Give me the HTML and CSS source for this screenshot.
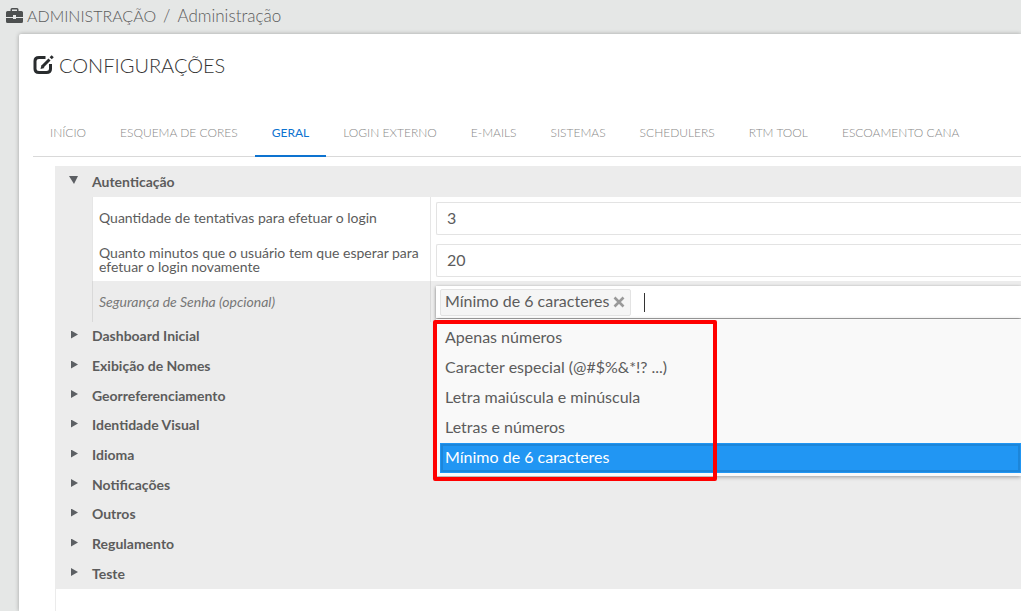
FILE: index.html
```html
<!DOCTYPE html>
<html lang="pt-BR">
<head>
<meta charset="utf-8">
<title>Configurações</title>
<link rel="stylesheet" href="styles.css">
</head>
<body>
<header class="crumbs">
  <svg class="crumbs-icon" viewBox="0 0 17 15" aria-hidden="true"><path fill="#4d5050" fill-rule="evenodd" d="M4.500 3V1.500Q4.500 0 6 0h5q1.500 0 1.500 1.500V3h3Q17 3 17 4.500V9H0V4.500Q0 3 1.500 3zM6 3h5V1.500H6zM7 7v2h3V7zM0 10h7v1h3v-1h7v3.500Q17 15 15.500 15h-14Q0 15 0 13.500z"/></svg>
  <span class="crumbs-root">ADMINISTRAÇÃO</span><span>/</span><span>Administração</span>
</header>
<main class="panel">
  <h1 class="title">
    <svg class="title-icon" viewBox="0 0 20 20" aria-hidden="true"><g fill="none" stroke="#292c2e"><path stroke-width="3" d="M12 2.500H5.500Q1.500 2.500 1.500 6v8q0 3.500 4 3.500h7.500q4 0 4-3.500V9"/><path stroke-width="3" d="M9 11.500 16 4.500"/><path stroke-width="3" d="M17.200 3.300 19.200 1.300"/></g><path fill="#292c2e" d="M7 14l1-4 3 3z"/></svg>
    CONFIGURAÇÕES
  </h1>
  <nav class="tabs">
    <a class="tab" href="#inicio">INÍCIO</a>
    <a class="tab" href="#cores">ESQUEMA DE CORES</a>
    <a class="tab tab-active" href="#geral" aria-current="page">GERAL</a>
    <a class="tab" href="#login">LOGIN EXTERNO</a>
    <a class="tab" href="#emails">E-MAILS</a>
    <a class="tab" href="#sistemas">SISTEMAS</a>
    <a class="tab" href="#schedulers">SCHEDULERS</a>
    <a class="tab" href="#rtm">RTM TOOL</a>
    <a class="tab" href="#cana">ESCOAMENTO CANA</a>
  </nav>
  <div class="content">
    <section class="tree">
      <button class="node node-open" type="button" aria-expanded="true"><i class="arrow arrow-down"></i>Autenticação</button>
      <form class="fields">
        <div class="field">
          <label class="name" for="tries">Quantidade de tentativas para efetuar o login</label>
          <div class="value"><input class="box" id="tries" type="text" value="3"></div>
        </div>
        <div class="field">
          <label class="name" for="wait">Quanto minutos que o usuário tem que esperar para efetuar o login novamente</label>
          <div class="value"><input class="box" id="wait" type="text" value="20"></div>
        </div>
        <div class="field field-optional">
          <label class="name" for="security">Segurança de Senha (opcional)</label>
          <div class="value">
            <div class="multi">
              <span class="chip">Mínimo de 6 caracteres
                <button class="chip-remove" type="button" aria-label="Remover"><svg class="cross" viewBox="0 0 12 12" aria-hidden="true"><path d="M1.500 1.500l9 9M10.500 1.500l-9 9" stroke="#999" stroke-width="2.600"/></svg></button>
              </span>
              <span class="caret"></span>
              <input class="search" id="security" type="text">
            </div>
            <div class="menu">
              <button class="option" type="button">Apenas números</button>
              <button class="option" type="button">Caracter especial (@#$%&amp;*!? ...)</button>
              <button class="option" type="button">Letra maiúscula e minúscula</button>
              <button class="option" type="button">Letras e números</button>
              <button class="option option-selected" type="button">Mínimo de 6 caracteres</button>
              <div class="highlight"></div>
            </div>
          </div>
        </div>
      </form>
      <div class="nodes">
        <button class="node" type="button"><i class="arrow"></i>Dashboard Inicial</button>
        <button class="node" type="button"><i class="arrow"></i>Exibição de Nomes</button>
        <button class="node" type="button"><i class="arrow"></i>Georreferenciamento</button>
        <button class="node" type="button"><i class="arrow"></i>Identidade Visual</button>
        <button class="node" type="button"><i class="arrow"></i>Idioma</button>
        <button class="node" type="button"><i class="arrow"></i>Notificações</button>
        <button class="node" type="button"><i class="arrow"></i>Outros</button>
        <button class="node" type="button"><i class="arrow"></i>Regulamento</button>
        <button class="node" type="button"><i class="arrow"></i>Teste</button>
      </div>
    </section>
  </div>
</main>
</body>
</html>
```
FILE: styles.css
```css
* { box-sizing: border-box; }
html, body { height: 100%; }
body {
  margin: 0;
  display: flex;
  flex-direction: column;
  overflow: hidden;
  background: #e5e7e6;
  color: #5c5c5c;
  font-family: Lato, "Open Sans", sans-serif;
  font-size: 16px;
}
button, input { font: inherit; color: inherit; }
button { border: 0; padding: 0; background: none; text-align: left; }

.crumbs {
  display: flex;
  align-items: center;
  gap: 7px;
  height: 34px;
  padding: 0 6px 3px;
  font-size: 17px;
  font-weight: 300;
  flex: none;
}
.crumbs-icon { width: 17px; height: 15px; margin-right: -3px; }
.crumbs-root { font-size: 16px; }

.panel {
  flex: 1;
  display: flex;
  flex-direction: column;
  margin-left: 19px;
  padding-left: 14px;
  background: #fff;
  border-top-left-radius: 2px;
  box-shadow: 0 0 4px rgba(0, 0, 0, .3);
}
.title {
  display: flex;
  align-items: center;
  gap: 5px;
  height: 61px;
  margin: 0;
  color: #333;
  font-size: 20px;
  font-weight: 300;
}
.title-icon { width: 21px; height: 20px; }

.tabs {
  display: flex;
  margin-top: 14px;
  border-bottom: 1px solid #d9d9d9;
}
.tab {
  padding: 0 17px;
  height: 48px;
  margin-bottom: -1px;
  line-height: 48px;
  color: #888;
  font-size: 12px;
  font-weight: 300;
  text-decoration: none;
  white-space: nowrap;
}
.tab-active { color: #0d73d0; border-bottom: 2px solid #0d73d0; font-weight: 400; }

.content {
  flex: 1;
  margin-left: 22px;
  padding-top: 9px;
}
.content { background: linear-gradient(#ebebeb, #ebebeb) 0 9px / 1px 100% no-repeat; }
.tree { background: #ececec; }
.node {
  display: flex;
  align-items: center;
  width: 100%;
  height: 30px;
  padding: 0 14px 3px;
  color: #5c5c5c;
  font-size: 14px;
  font-weight: 700;
}
.node:nth-child(3n) { height: 29px; }
.node-open { height: 31px; padding-bottom: 1px; }
.arrow {
  width: 23px;
  height: 10px;
  background: #5c5f63;
  clip-path: polygon(2px 0, 9px 4px, 2px 8px);
}
.arrow-down { clip-path: polygon(0 0, 9px 0, 5px 8px); }

.fields { margin: 0 0 0 37px; background: #fff; }
.field { display: grid; grid-template-columns: 339px 1fr; min-height: 42px; }
.name {
  display: flex;
  align-items: center;
  padding: 0 6px;
  border-left: 1px solid #e6e6e6;
  border-right: 1px solid #e6e6e6;
  font-size: 14px;
  line-height: 14px;
}
.value { position: relative; padding: 5px 0 4px 5px; }
.box {
  display: block;
  width: 100%;
  height: 33px;
  padding: 0 10px 2px;
  border: 1px solid #e3e3e3;
  border-right: 0;
  border-radius: 2px 0 0 2px;
  background: #fff;
}
.field-optional { min-height: 41px; background: #ececec; }
.field-optional .name { border-color: #d9d9d9; color: #777; font-style: italic; }
.multi {
  display: flex;
  align-items: center;
  height: 32px;
  padding: 0 4px;
  background: #fff;
  box-shadow: 0 1px 3px rgba(0, 0, 0, .5);
}
.chip {
  display: flex;
  align-items: center;
  gap: 4px;
  height: 27px;
  padding: 0 5px 3px 4px;
  border: 1px solid #e3e3e3;
  border-radius: 2px;
  background: #f5f5f5;
  white-space: nowrap;
}
.chip-remove { display: flex; padding-top: 3px; }
.cross { width: 12px; height: 12px; }
.caret { width: 1px; height: 19px; margin-left: 13px; background: #333; }
.search { flex: 1; min-width: 0; border: 0; outline: 0; background: none; }
.menu {
  position: absolute;
  z-index: 1;
  top: 38px;
  left: 5px;
  right: 0;
  padding: 4px 0 3px 4px;
  background: #f9f9f9;
  box-shadow: 0 1px 4px rgba(0, 0, 0, .35);
}
.option { display: block; width: 100%; height: 30px; padding: 0 5px 4px; }
.option-selected {
  color: #fff;
  background: #2196f3;
  outline: 2px solid #1c86da;
  outline-offset: -3px;
}
.highlight {
  position: absolute;
  top: 1px;
  left: -3px;
  width: 284px;
  height: 161px;
  border: 4px solid #f00;
  border-radius: 2px;
  pointer-events: none;
}
```
